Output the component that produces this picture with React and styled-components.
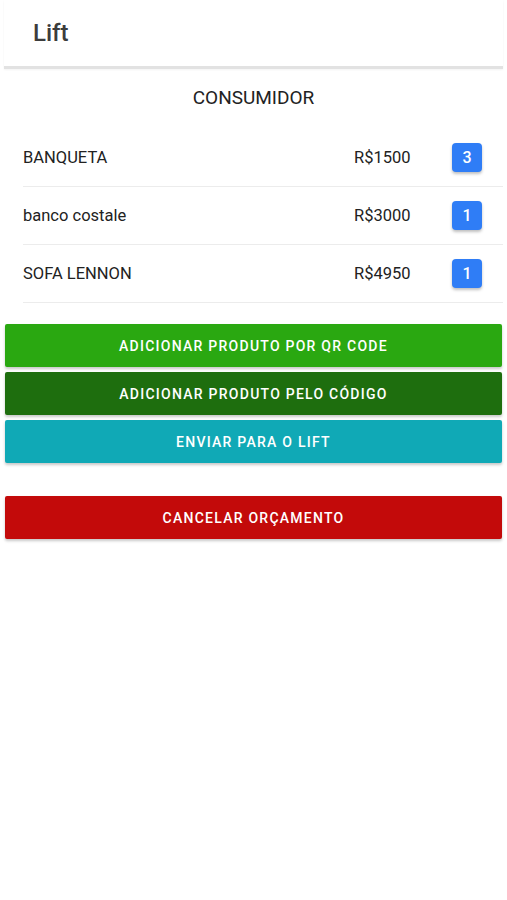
import React from "react";
import styled, { createGlobalStyle } from "styled-components";

const GlobalStyle = createGlobalStyle`
	body {
		margin: 0;
		background: #fff;
		font-family: Roboto, "Liberation Sans", sans-serif;
	}
`;

const items = [
	{ name: "BANQUETA", price: "R$1500", qty: 3 },
	{ name: "banco costale", price: "R$3000", qty: 1 },
	{ name: "SOFA LENNON", price: "R$4950", qty: 1 },
];

const actions = [
	{ label: "ADICIONAR PRODUTO POR QR CODE", color: "#2aa811" },
	{ label: "ADICIONAR PRODUTO PELO CÓDIGO", color: "#1e6e0e" },
	{ label: "ENVIAR PARA O LIFT", color: "#10a9b6" },
];

const App = () => {
	return (
		<Page>
			<GlobalStyle />
			<AppBar>
				<AppTitle>Lift</AppTitle>
			</AppBar>
			<Heading>CONSUMIDOR</Heading>
			<List>
				{items.map((item) => (
					<Row key={item.name}>
						<span>{item.name}</span>
						<span>{item.price}</span>
						<Badge>{item.qty}</Badge>
					</Row>
				))}
			</List>
			<Actions>
				{actions.map((a) => (
					<ActionButton key={a.label} $bg={a.color}>
						{a.label}
					</ActionButton>
				))}
			</Actions>
			<CancelWrap>
				<ActionButton $bg='#c30a0a'>CANCELAR ORÇAMENTO</ActionButton>
			</CancelWrap>
		</Page>
	);
};

const Page = styled.div`
	width: 507px;
	min-height: 900px;
	background: #fff;
`;

const AppBar = styled.header`
	height: 69px;
	margin: 0 4px;
	padding-left: 29px;
	display: flex;
	align-items: center;
	border-bottom: 3px solid #e2e2e2;
	box-sizing: border-box;
	box-shadow: 0 1px 2px rgba(0, 0, 0, 0.05);
`;

const AppTitle = styled.h1`
	margin: 0;
	font-size: 24px;
	font-weight: 500;
	color: #3c3c3c;
`;

const Heading = styled.div`
	height: 60px;
	padding-bottom: 4px;
	box-sizing: border-box;
	display: flex;
	align-items: center;
	justify-content: center;
	font-size: 19px;
	color: #222;
`;

const List = styled.div`
	margin: 0 4px 0 23px;
`;

const Row = styled.div`
	height: 58px;
	display: grid;
	grid-template-columns: 1fr 98px 30px;
	align-items: center;
	padding-right: 21px;
	border-bottom: 1px solid #ececec;
	box-sizing: border-box;
	font-size: 16.5px;
	color: #222;
`;

const Badge = styled.span`
	width: 30px;
	height: 29px;
	border-radius: 4px;
	background: #2f7df6;
	color: #fff;
	font-size: 16px;
	font-weight: 500;
	display: flex;
	align-items: center;
	justify-content: center;
	box-shadow: 0 2px 3px rgba(0, 0, 0, 0.25);
`;

const Actions = styled.div`
	margin: 21px 5px 0 5px;
	display: flex;
	flex-direction: column;
	gap: 5px;
`;

const CancelWrap = styled.div`
	margin: 33px 5px 0 5px;
`;

const ActionButton = styled.button`
	width: 100%;
	height: 43px;
	border: none;
	border-radius: 2px;
	background: ${(p) => p.$bg};
	color: #fff;
	font-family: Roboto, "Liberation Sans", sans-serif;
	font-size: 14px;
	font-weight: 500;
	letter-spacing: 1.25px;
	box-shadow: 0 2px 3px rgba(0, 0, 0, 0.22);
	cursor: pointer;
	display: block;
`;

export default App;
